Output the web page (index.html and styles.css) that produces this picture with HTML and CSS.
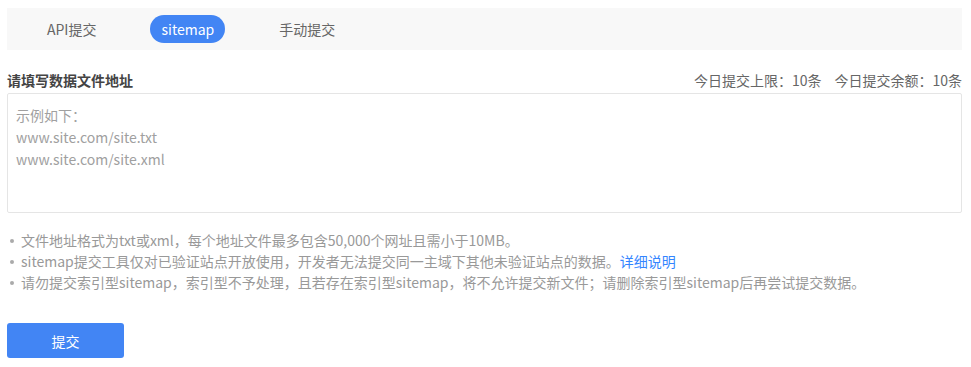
FILE: index.html
```html
<!DOCTYPE html>
<html lang="zh-CN">
<head>
  <meta charset="UTF-8">
  <meta name="viewport" content="width=device-width, initial-scale=1.0">
  <title>sitemap提交</title>
  <link rel="stylesheet" href="styles.css">
</head>
<body>
<div class="page">
  <div class="tab-bar">
    <span class="tab">API提交</span>
    <span class="tab active">sitemap</span>
    <span class="tab">手动提交</span>
  </div>

  <div class="label-row">
    <span class="label">请填写数据文件地址</span>
    <span class="quota">今日提交上限：10条<span class="quota-gap"></span>今日提交余额：10条</span>
  </div>

  <textarea class="url-box" placeholder="示例如下：&#10;www.site.com/site.txt&#10;www.site.com/site.xml"></textarea>

  <ul class="tips">
    <li>文件地址格式为txt或xml，每个地址文件最多包含50,000个网址且需小于10MB。</li>
    <li>sitemap提交工具仅对已验证站点开放使用，开发者无法提交同一主域下其他未验证站点的数据。<a href="#" class="more">详细说明</a></li>
    <li>请勿提交索引型sitemap，索引型不予处理，且若存在索引型sitemap，将不允许提交新文件；请删除索引型sitemap后再尝试提交数据。</li>
  </ul>

  <button class="submit">提交</button>
</div>
</body>
</html>
```

FILE: styles.css
```css
body {
  margin: 0;
  background: white;
  font-family: "Microsoft YaHei", "Noto Sans CJK SC", sans-serif;
  font-size: 14px;
  color: #666;
}
.page {
  padding: 8px 9px 0 7px;
}
/* Tabs */
.tab-bar {
  display: flex;
  align-items: center;
  gap: 40px;
  height: 42px;
  padding-left: 26px;
  background-color: #f8f8f8;
}
.tab {
  padding: 0 14px;
  height: 28px;
  line-height: 28px;
  border-radius: 14px;
  color: #666;
}
.tab.active {
  padding: 0 11px;
  background-color: #4285f4;
  color: white;
}
/* Label row */
.label-row {
  display: flex;
  justify-content: space-between;
  align-items: center;
  margin-top: 20px;
  margin-bottom: 3px;
  line-height: 20px;
}
.label {
  font-weight: bold;
  color: #444;
}
.quota {
  color: #666;
}
.quota-gap {
  display: inline-block;
  width: 13px;
}
/* Textarea */
.url-box {
  display: block;
  box-sizing: border-box;
  width: 100%;
  height: 120px;
  padding: 10px 8px;
  border: 1px solid #e5e5e5;
  border-radius: 2px;
  font-family: inherit;
  font-size: 14px;
  line-height: 22px;
  color: #333;
  resize: none;
  outline: none;
}
.url-box::placeholder {
  color: #a0a0a0;
}
/* Tips */
.tips {
  list-style: none;
  margin: 17px 0 0;
  padding: 0;
  font-size: 14px;
  line-height: 21px;
  color: #999;
}
.tips li {
  position: relative;
  padding-left: 14px;
}
.tips li::before {
  content: "";
  position: absolute;
  left: 3px;
  top: 9px;
  width: 4px;
  height: 4px;
  border-radius: 50%;
  background-color: #aaa;
}
.more {
  color: #3385ff;
  text-decoration: none;
}
/* Button */
.submit {
  display: block;
  margin-top: 30px;
  width: 117px;
  height: 35px;
  border: none;
  border-radius: 3px;
  background-color: #4285f4;
  color: white;
  font-family: inherit;
  font-size: 14px;
  cursor: pointer;
}
```
